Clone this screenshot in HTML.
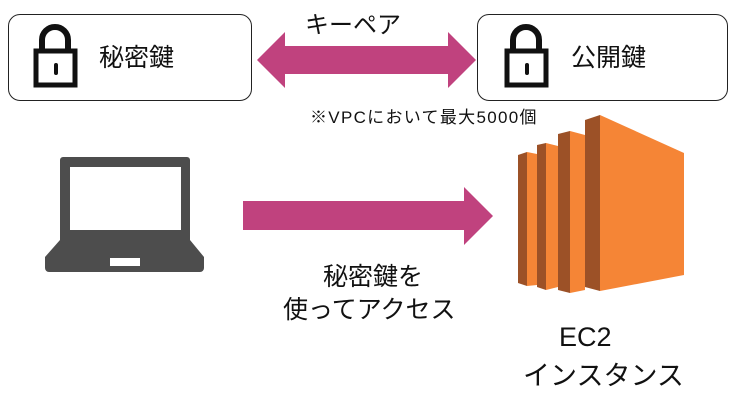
<!DOCTYPE html>
<html><head><meta charset="utf-8"><style>
body{margin:0;width:736px;height:403px;background:#fff;position:relative;overflow:hidden;font-family:"Liberation Sans","Noto Sans CJK JP",sans-serif;color:#111}
.box{position:absolute;border:1.5px solid #222;border-radius:12px;background:#fff}
.t{position:absolute;white-space:nowrap}
</style></head><body>
<div class="box" style="left:8px;top:14px;width:242px;height:85px"></div>
<div class="box" style="left:477px;top:14px;width:249px;height:85px"></div>
<svg width="736" height="403" style="position:absolute;left:0;top:0">
<g fill="none" stroke="#111" stroke-width="6">
<path d="M42 52 V40 a13 13 0 0 1 26 0 V52"/>
<path d="M513 52 V40 a13 13 0 0 1 26 0 V52"/>
</g>
<rect x="36" y="51" width="39" height="34" fill="none" stroke="#111" stroke-width="5"/>
<rect x="507" y="51" width="39" height="34" fill="none" stroke="#111" stroke-width="5"/>
<rect x="54" y="63" width="4" height="12" rx="2" fill="#111"/>
<rect x="525" y="63" width="4" height="12" rx="2" fill="#111"/>
<polygon fill="#c0427e" points="257,60 285,32 285,46 448,46 448,32 476,60 448,88 448,74 285,74 285,88"/>
<polygon fill="#c0427e" points="243,201 464,201 464,187 493,216 464,245 464,230 243,230"/>
<path fill="#4d4d4d" d="M63 157 H187 a3 3 0 0 1 3 3 V240 L204 257 V268 a4 4 0 0 1 -4 4 H49 a4 4 0 0 1 -4 -4 V257 L60 240 V160 a3 3 0 0 1 3 -3Z"/>
<rect x="70" y="167" width="111" height="63" fill="#fff"/>
<rect x="110" y="258" width="30" height="8" fill="#fff"/>
<g>
<polygon fill="#9c5127" points="518,155 527,152 527,286 518,283"/>
<polygon fill="#f58536" points="527,152 537,154 537,285 527,286"/>
<polygon fill="#9c5127" points="537,145 546,143 546,290 537,287"/>
<polygon fill="#f58536" points="546,143 558,146 558,287 546,290"/>
<polygon fill="#9c5127" points="558,134 570,131 570,293 558,290"/>
<polygon fill="#f58536" points="570,131 585,135 585,290 570,293"/>
<polygon fill="#9c5127" points="585,120 600,115 600,291 585,287"/>
<polygon fill="#f58536" points="600,115 684,153 684,275 600,291"/>
</g>
</svg>
<div class="t" style="left:99px;top:38px;font-size:25px">秘密鍵</div>
<div class="t" style="left:571px;top:38px;font-size:25px">公開鍵</div>
<div class="t" style="left:305px;top:5px;font-size:24px">キーペア</div>
<div class="t" style="left:310px;top:103px;font-size:17px;letter-spacing:1.3px">※VPCにおいて最大5000個</div>
<div class="t" style="left:323px;top:257px;font-size:25px">秘密鍵を</div>
<div class="t" style="left:283px;top:290px;font-size:25px">使ってアクセス</div>
<div class="t" style="left:559px;top:322px;font-size:27px">EC2</div>
<div class="t" style="left:523px;top:354px;font-size:27px">インスタンス</div>
</body></html>
